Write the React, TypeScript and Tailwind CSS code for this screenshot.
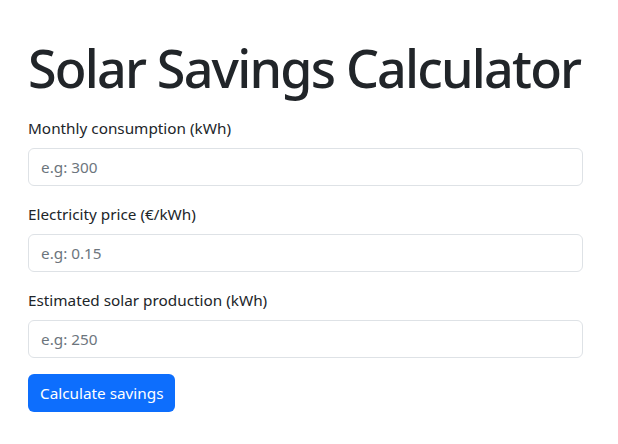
export default function App() {
  const fields = [
    { label: "Monthly consumption (kWh)", ph: "e.g: 300" },
    { label: "Electricity price (€/kWh)", ph: "e.g: 0.15" },
    { label: "Estimated solar production (kWh)", ph: "e.g: 250" },
  ];
  return (
    <div className="min-h-screen bg-white text-[#212529] font-['Noto_Sans',sans-serif]">
      <div className="px-[28px] pt-[32px] w-[611px]">
        <h1 className="text-[52px] leading-[72px] font-medium tracking-[-1.8px] whitespace-nowrap mb-[12px]">Solar Savings Calculator</h1>
        {fields.map((f) => (
          <div key={f.label} className="mb-[16px]">
            <label className="block text-[15.3px] leading-[24px] mb-[8px]">{f.label}</label>
            <input
              type="number"
              placeholder={f.ph}
              className="block w-full h-[38px] px-[12px] text-[15.3px] border border-[#dee2e6] rounded-[6px] placeholder:text-[#6c757d] outline-none"
            />
          </div>
        ))}
        <button className="h-[38px] px-[12px] text-[15.3px] text-white bg-[#0d6efd] rounded-[6px]">
          Calculate savings
        </button>
      </div>
    </div>
  );
}
